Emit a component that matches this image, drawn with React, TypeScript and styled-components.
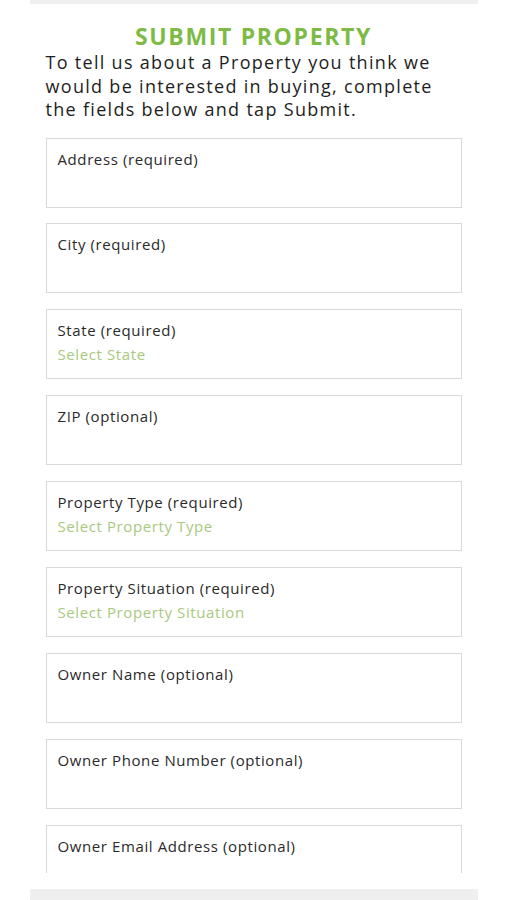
import styled, { createGlobalStyle } from "styled-components";

const GlobalStyle = createGlobalStyle`
  html, body {
    margin: 0;
    padding: 0;
    background: #ffffff;
  }
  body {
    font-family: "Open Sans", "Liberation Sans", sans-serif;
    color: #222;
  }
`;

const Page = styled.div`
  width: 448px;
  height: 900px;
  margin: 0 auto;
  display: flex;
  flex-direction: column;
`;

const Bar = styled.div<{ $h: number }>`
  height: ${(p) => p.$h}px;
  background: #efefef;
  flex-shrink: 0;
`;

const Scroll = styled.div`
  height: 869px;
  overflow: hidden;
  padding: 19px 16px 0;
  box-sizing: border-box;
  margin-bottom: 16px;
`;

const Title = styled.h1`
  margin: 0;
  text-align: center;
  font-size: 23px;
  line-height: 27px;
  font-weight: 700;
  letter-spacing: 1.65px;
  color: #7dbb45;
`;

const Intro = styled.p`
  margin: 1px 0 16px;
  font-size: 18px;
  line-height: 23.5px;
  letter-spacing: 1.3px;
  color: #1e1e1e;
`;

const Fields = styled.div`
  display: flex;
  flex-direction: column;
  gap: 15.9px;
`;

const Field = styled.div`
  height: 70px;
  box-sizing: border-box;
  border: 1px solid #d9d9d9;
  padding: 10px 11px 0;
  display: flex;
  flex-direction: column;
  gap: 4px;
  flex-shrink: 0;
`;

const Label = styled.div`
  font-size: 15px;
  line-height: 20px;
  letter-spacing: 0.6px;
  color: #2a2a2a;
`;

const Placeholder = styled(Label)`
  color: #a8c97e;
`;

type FieldDef = { label: string; placeholder?: string };

const fields: FieldDef[] = [
  { label: "Address (required)" },
  { label: "City (required)" },
  { label: "State (required)", placeholder: "Select State" },
  { label: "ZIP (optional)" },
  { label: "Property Type (required)", placeholder: "Select Property Type" },
  { label: "Property Situation (required)", placeholder: "Select Property Situation" },
  { label: "Owner Name (optional)" },
  { label: "Owner Phone Number (optional)" },
  { label: "Owner Email Address (optional)" },
];

export default function App() {
  return (
    <>
      <GlobalStyle />
      <Page>
        <Bar $h={4} />
        <Scroll>
          <Title>SUBMIT PROPERTY</Title>
          <Intro>
            To tell us about a Property you think we would be interested in
            buying, complete the fields below and tap Submit.
          </Intro>
          <Fields>
            {fields.map((f) => (
              <Field key={f.label}>
                <Label>{f.label}</Label>
                {f.placeholder && <Placeholder>{f.placeholder}</Placeholder>}
              </Field>
            ))}
          </Fields>
        </Scroll>
        <Bar $h={11} />
      </Page>
    </>
  );
}
